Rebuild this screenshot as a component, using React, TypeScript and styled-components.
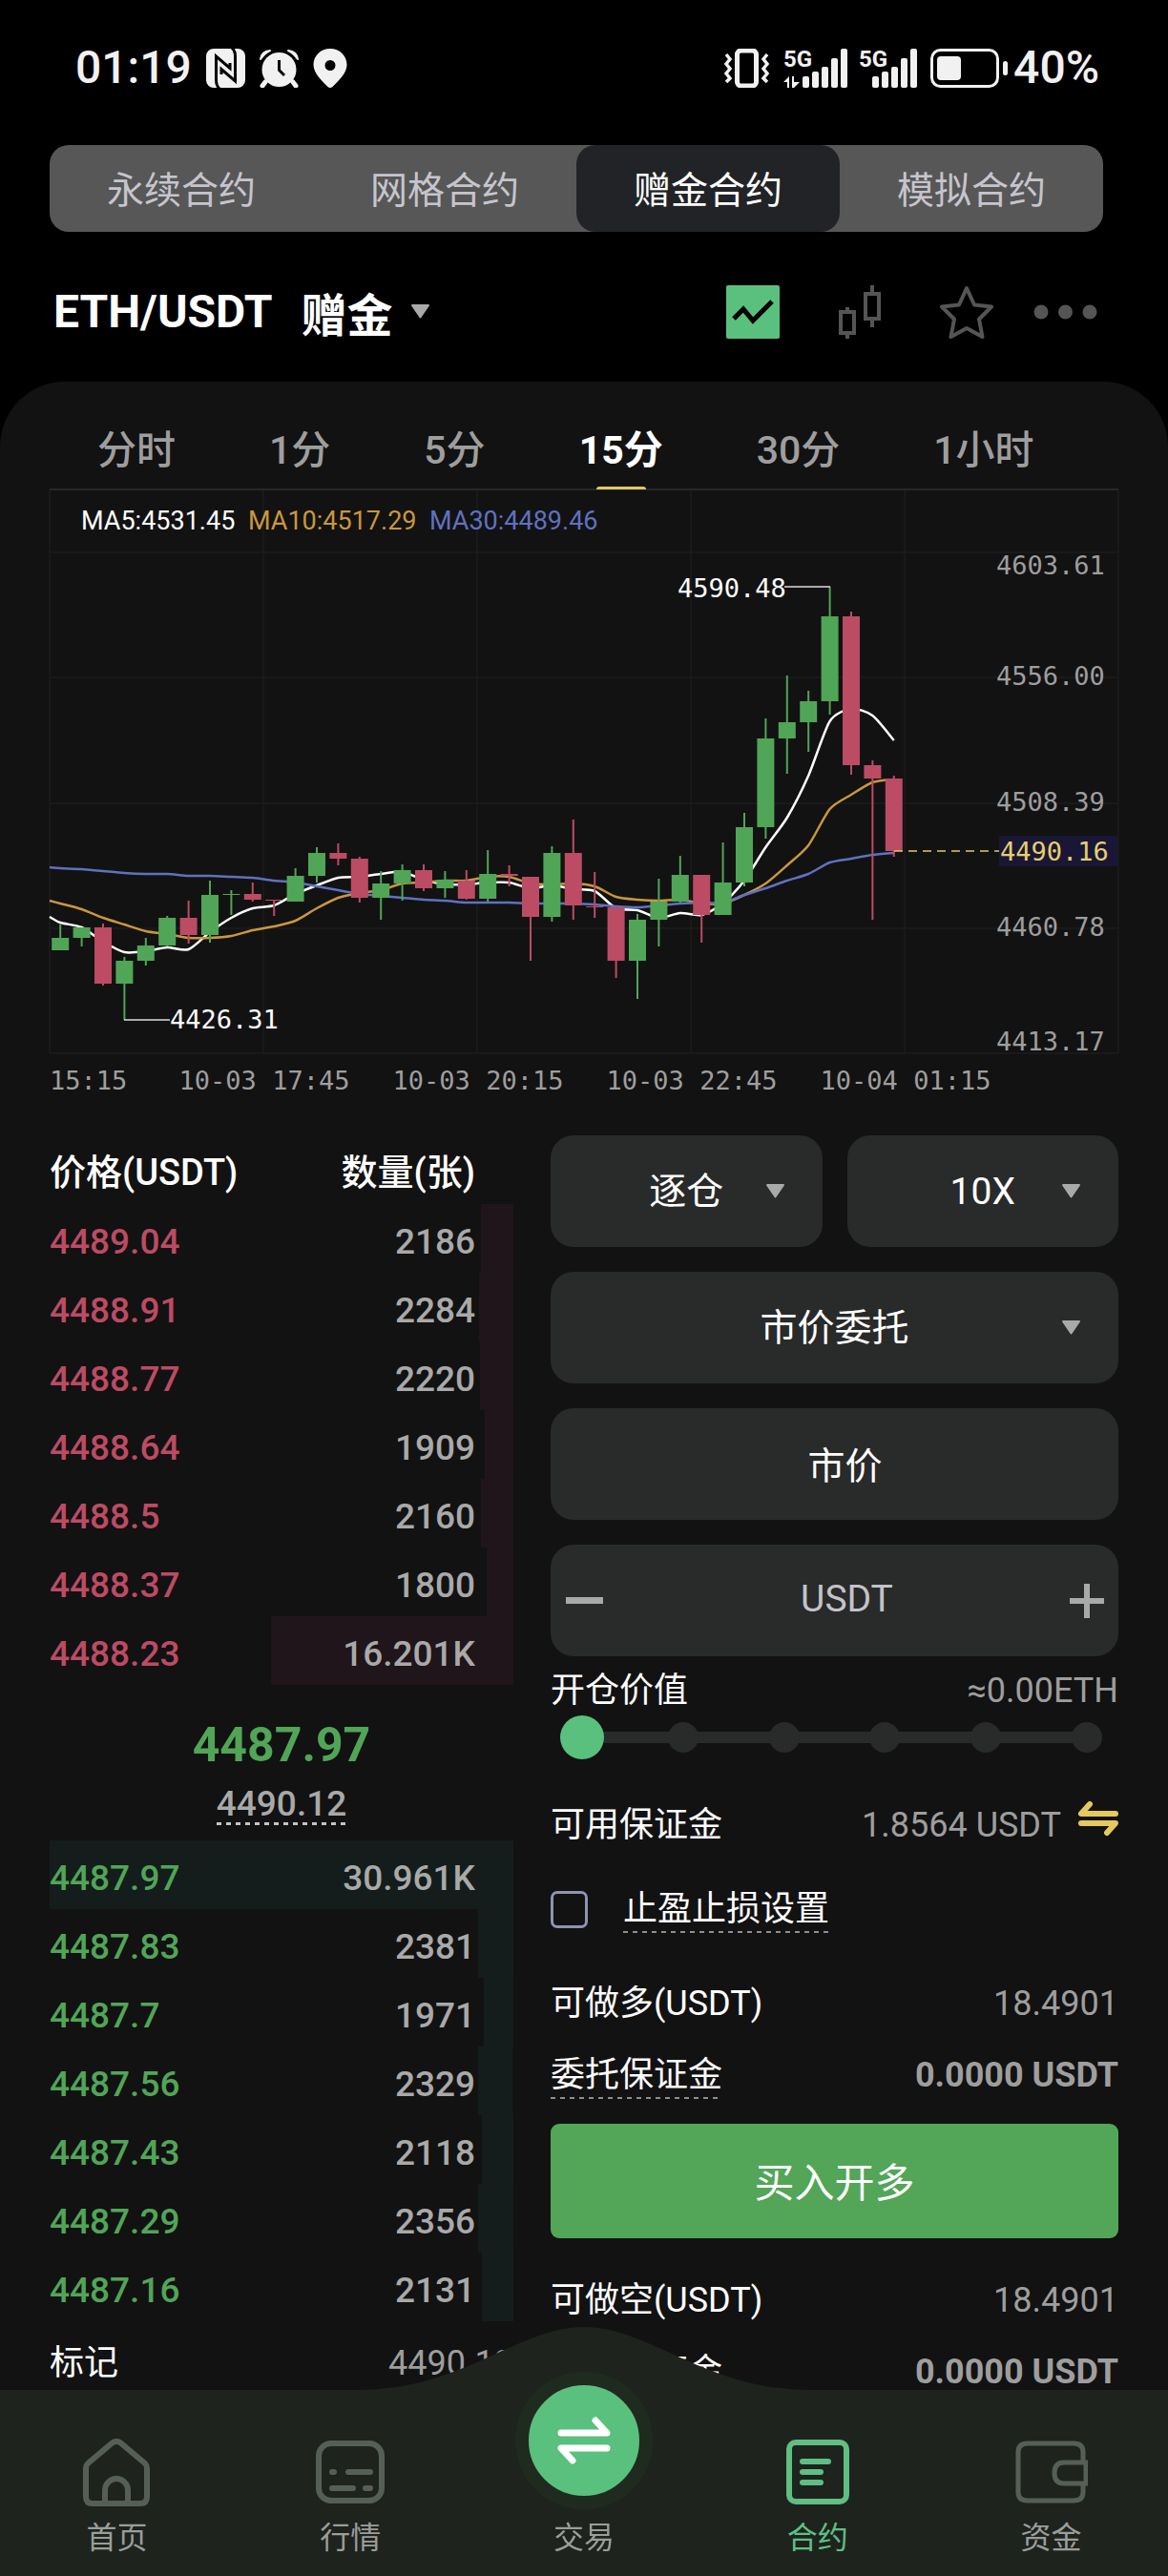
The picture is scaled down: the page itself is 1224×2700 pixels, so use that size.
import React, { useState } from "react";
import styled, { createGlobalStyle, css } from "styled-components";

const color = {
  page: "#000000",
  panel: "#121212",
  field: "#292a2a",
  line: "#1d1d21",
  white: "#ffffff",
  muted: "#9e9e9e",
  soft: "#a9a9a9",
  mint: "#5ac07d",
  up: "#51a557",
  down: "#bc4b64",
  gold: "#e3c960",
  orange: "#c9973f",
  blue: "#6071c0",
  nav: "#1e231e",
};

const sans = `Roboto, "Noto Sans CJK SC", sans-serif`;
const mono = `"DejaVu Sans Mono", monospace`;

const GlobalStyle = createGlobalStyle`
  * { box-sizing: border-box; }
  body { margin: 0; background: ${color.page}; font-family: ${sans}; color: ${color.white}; }
  button, input, select { font: inherit; color: inherit; border: 0; background: none; margin: 0; padding: 0; outline: none; }
  button { cursor: pointer; }
  a { color: inherit; text-decoration: none; }
  svg { display: block; flex: none; }
`;

/* ---------- page frame ---------- */

const Page = styled.div`
  display: flex;
  flex-direction: column;
  min-height: 100vh;
`;

const StatusBar = styled.div`
  display: flex;
  justify-content: space-between;
  align-items: center;
  height: 152px;
  padding: 0 72px 10px 79px;
  color: #f1f1f1;
`;

const StatusGroup = styled.div<{ $gap: number }>`
  display: flex;
  align-items: center;
  gap: ${(p) => p.$gap}px;
`;

const StatusText = styled.span`
  font-size: 48px;
  line-height: 56px;
  font-weight: 500;
`;

const Segments = styled.nav`
  display: grid;
  grid-template-columns: repeat(4, 1fr);
  height: 91px;
  margin: 0 68px 0 52px;
  border-radius: 20px;
  background: #575757;
`;

const Segment = styled.button<{ $active?: boolean }>`
  padding-bottom: 4px;
  border-radius: 20px;
  font-size: 39px;
  color: ${(p) => (p.$active ? color.white : "#c6c5cd")};
  background: ${(p) => (p.$active ? "#222327" : "transparent")};
`;

const Header = styled.header`
  display: flex;
  justify-content: space-between;
  align-items: center;
  height: 157px;
  padding: 10px 74px 0 56px;
`;

const Pair = styled.button`
  display: flex;
  align-items: center;
  font-size: 48px;
  font-weight: 700;
`;

const PairName = styled.span`
  margin-right: 30px;
`;

const PairKind = styled.span`
  margin-right: 18px;
`;

const HeaderTools = styled.div`
  display: flex;
  align-items: center;
  color: #555555;
`;

const Tool = styled.button<{ $space: number }>`
  margin-left: ${(p) => p.$space}px;
`;

const Panel = styled.main`
  flex: 1;
  padding: 0 52px 170px;
  background: ${color.panel};
  border-radius: 68px 68px 0 0;
`;

/* ---------- chart ---------- */

const Periods = styled.div`
  display: flex;
  gap: 98px;
  height: 113px;
  padding: 0 50px;
`;

const Period = styled.button<{ $active?: boolean }>`
  position: relative;
  padding-top: 23px;
  font-size: 41px;
  font-weight: 500;
  white-space: nowrap;
  color: ${(p) => (p.$active ? color.white : color.muted)};
  ${(p) =>
    p.$active &&
    css`
      font-weight: 700;
      &::after {
        content: "";
        position: absolute;
        left: calc(50% - 26px);
        bottom: 0;
        width: 52px;
        height: 3px;
        border-radius: 3px 3px 0 0;
        background: ${color.gold};
      }
    `}
`;

const ChartSvg = styled.svg`
  width: 100%;
  height: auto;
  overflow: visible;
  font-size: 27px;
`;

const AxisText = styled.text`
  font-family: ${mono};
  fill: ${color.muted};
`;

const MarkText = styled.text`
  font-family: ${mono};
  fill: ${color.white};
`;

const PriceText = styled.text`
  font-family: ${mono};
  fill: #e6cf6e;
`;

/* ---------- trading area ---------- */

const Trading = styled.section`
  display: grid;
  grid-template-columns: 486fr 595fr;
  gap: 39px;
  margin-top: 37px;
`;

const Book = styled.div`
  min-width: 0;
`;

const BookTable = styled.table`
  width: 100%;
  border-collapse: collapse;
  font-size: 37px;
  font-weight: 500;
`;

const BookHead = styled.th<{ $end?: boolean }>`
  height: 72px;
  padding: ${(p) => (p.$end ? "0 40px 2px 0" : "0 0 2px")};
  text-align: ${(p) => (p.$end ? "right" : "left")};
  font-size: 38px;
  font-weight: 500;
`;

const BookRow = styled.tr<{ $side: "ask" | "bid" }>`
  height: 72px;
  color: ${(p) => (p.$side === "ask" ? color.down : color.up)};
  background-image: ${(p) =>
    p.$side === "ask"
      ? "linear-gradient(#20151a, #20151a)"
      : "linear-gradient(#141d1b, #141d1b)"};
  background-position: right center;
  background-repeat: no-repeat;
`;

const PriceCell = styled.td`
  padding: 6px 0 0;
`;

const AmountCell = styled.td`
  padding: 6px 40px 0 0;
  text-align: right;
  color: ${color.soft};
`;

const MidCell = styled.td`
  height: 163px;
  padding: 33px 0 0;
  vertical-align: top;
  text-align: center;
`;

const LastPrice = styled.div`
  font-size: 50px;
  line-height: 60px;
  font-weight: 700;
  color: ${color.up};
`;

const dashes = (thickness: number, tint: string) => css`
  background: repeating-linear-gradient(90deg, ${tint} 0 5px, transparent 5px 10px)
    left bottom / 100% ${thickness}px no-repeat;
`;

const IndexPrice = styled.span`
  display: inline-block;
  margin-top: 12px;
  height: 42px;
  line-height: 40px;
  color: ${color.soft};
  ${dashes(3, "#c4c4c4")}
`;

const Line = styled.div<{ $top: number }>`
  display: flex;
  justify-content: space-between;
  align-items: center;
  height: 50px;
  margin-top: ${(p) => p.$top}px;
  font-size: 36px;
  line-height: 50px;
  white-space: nowrap;
`;

const Hint = styled.span`
  ${dashes(2, "#8e8e8e")}
`;

const Value = styled.span<{ $strong?: boolean }>`
  display: flex;
  align-items: center;
  gap: 18px;
  color: ${color.muted};
  font-weight: ${(p) => (p.$strong ? 700 : 400)};
`;

const Form = styled.form`
  min-width: 0;
`;

const Fields = styled.div`
  display: grid;
  grid-template-columns: 1fr 1fr;
  gap: 26px;
  font-size: 39px;
`;

const Field = styled.div<{ $wide?: boolean }>`
  display: grid;
  align-items: center;
  height: 117px;
  border-radius: 24px;
  background: ${color.field};
  grid-column: ${(p) => (p.$wide ? "1 / -1" : "auto")};
`;

const Select = styled.select`
  grid-area: 1 / 1;
  width: 100%;
  height: 100%;
  appearance: none;
  text-align: center;
  text-align-last: center;
`;

const SelectCaret = styled.span`
  grid-area: 1 / 1;
  justify-self: end;
  margin-right: 39px;
  pointer-events: none;
`;

const TextInput = styled.input`
  width: 100%;
  height: 100%;
  min-width: 0;
  padding: 0 0 3px 22px;
  text-align: center;
  &::placeholder {
    color: #c3c3c9;
    opacity: 1;
  }
`;

const Stepper = styled(Field)`
  grid-template-columns: 40px 1fr 36px;
  padding: 0 15px;
`;

const StepButton = styled.button`
  display: grid;
  place-items: center;
  height: 100%;
`;

const SliderBox = styled.div`
  display: grid;
  align-items: center;
  height: 48px;
  margin: 0 10px;
`;

const SliderStops = styled.div`
  grid-area: 1 / 1;
  display: flex;
  justify-content: space-between;
  padding: 0 7px;
  background: linear-gradient(${color.field}, ${color.field}) center / calc(100% - 46px) 12px no-repeat;
`;

const Stop = styled.span`
  width: 32px;
  height: 32px;
  border-radius: 50%;
  background: ${color.field};
`;

const Range = styled.input`
  grid-area: 1 / 1;
  width: 100%;
  height: 48px;
  appearance: none;
  z-index: 1;
  &::-webkit-slider-thumb {
    appearance: none;
    width: 46px;
    height: 46px;
    border-radius: 50%;
    background: ${color.mint};
  }
`;

const CheckLabel = styled.label`
  display: flex;
  align-items: center;
  gap: 37px;
`;

const Checkbox = styled.input`
  appearance: none;
  width: 39px;
  height: 39px;
  border: 3px solid #8f93b0;
  border-radius: 7px;
  &:checked {
    background: ${color.mint};
  }
`;

const BuyButton = styled.button`
  width: 100%;
  height: 120px;
  margin-top: 26px;
  padding-bottom: 4px;
  border-radius: 9px;
  font-size: 42px;
  background: #53a558;
`;

/* ---------- bottom navigation ---------- */

const BottomNav = styled.nav`
  position: fixed;
  left: 0;
  right: 0;
  bottom: 0;
  z-index: 2;
  height: 195px;
  display: grid;
  grid-template-columns: repeat(5, 1fr);
  align-items: end;
  padding-bottom: 22px;
  background: ${color.nav};
`;

const Bump = styled.svg`
  position: absolute;
  left: calc(50% - 237px);
  bottom: 100%;
`;

const NavItem = styled.a<{ $active?: boolean; $gap?: number }>`
  position: relative;
  display: flex;
  flex-direction: column;
  align-items: center;
  gap: ${(p) => p.$gap ?? 14}px;
  color: ${(p) => (p.$active ? "#60be82" : "#565f56")};
`;

const NavLabel = styled.span<{ $active?: boolean }>`
  font-size: 32px;
  line-height: 36px;
  color: ${(p) => (p.$active ? "#60be82" : "#9a9d9a")};
`;

const TradeDisc = styled.span`
  display: grid;
  place-items: center;
  width: 144px;
  height: 144px;
  margin-top: -20px;
  border: 14px solid #202b20;
  border-radius: 50%;
  color: ${color.white};
  background: ${color.mint};
`;

/* ---------- drawings ---------- */

const Caret = ({ w = 21 }: { w?: number }) => (
  <svg width={w} height="15" viewBox="0 0 21 15">
    <path d="M2 1H19L10.500 13.500Z" fill={color.soft} stroke={color.soft} strokeWidth="2" strokeLinejoin="round" />
  </svg>
);

const NfcIcon = () => (
  <svg width="41" height="41" viewBox="0 0 41 41">
    <rect width="41" height="41" rx="8" fill="#f1f1f1" />
    <path d="M14 42Q10.500 39 10.500 33V8L25 20.500V15" fill="none" stroke="#000" strokeWidth="3" />
    <path d="M27 -1Q30.500 2 30.500 8V34L16 21.500V27" fill="none" stroke="#000" strokeWidth="3" />
  </svg>
);

const AlarmIcon = () => (
  <svg width="41" height="41" viewBox="0 0 41 41">
    <circle cx="20.500" cy="22" r="18" fill="#f1f1f1" />
    <path d="M6 35L3 39M35 35L38 39" stroke="#f1f1f1" strokeWidth="5" strokeLinecap="round" />
    <path d="M1 11Q2 3 11 2Q5 5 1 11ZM40 11Q39 3 30 2Q36 5 40 11Z" fill="#f1f1f1" stroke="#f1f1f1" strokeWidth="2" strokeLinejoin="round" />
    <path d="M20.500 12V22.500L26 28" fill="none" stroke="#000" strokeWidth="3" />
  </svg>
);

const PinIcon = () => (
  <svg width="36" height="41" viewBox="0 0 36 41">
    <path
      fillRule="evenodd"
      d="M18 0C8 0 .500 7.500 .500 17C.500 26 10 34 15.500 40Q18 42 20.500 40C26 34 35.500 26 35.500 17C35.500 7.500 28 0 18 0ZM18 12A5.500 5.500 0 1 1 18 23A5.500 5.500 0 1 1 18 12Z"
      fill="#f1f1f1"
    />
  </svg>
);

const VibrateIcon = () => (
  <svg width="49" height="41" viewBox="0 0 49 41">
    <rect x="14.500" y="2" width="20" height="37" rx="4" fill="none" stroke="#f1f1f1" strokeWidth="5" />
    <path d="M3 6L7 11L3 16L7 21L3 26L7 31L3 35M46 6L42 11L46 16L42 21L46 26L42 31L46 35" fill="none" stroke="#f1f1f1" strokeWidth="3.500" />
  </svg>
);

const SignalSvg = styled.svg`
  overflow: visible;
`;

const NetText = styled.text`
  font-size: 24px;
  font-weight: 700;
  fill: #f1f1f1;
`;

const SignalIcon = ({ arrows }: { arrows?: boolean }) => {
  const offset = arrows ? 20 : 14;
  return (
    <SignalSvg width={offset + 47} height="49" viewBox={`0 -4 ${offset + 47} 49`}>
      <NetText x="0" y="19">5G</NetText>
      {arrows && <path d="M0 35L6 29V41H4V35ZM9 29H11V35H17L11 41H9Z" fill="#f1f1f1" />}
      {[12, 17, 22, 31, 41].map((h, i) => (
        <rect key={h} x={offset + i * 10} y={41 - h} width="7" height={h} rx="2" fill="#f1f1f1" />
      ))}
    </SignalSvg>
  );
};

const BatteryIcon = () => (
  <svg width="82" height="41" viewBox="0 0 82 41">
    <rect x="1.500" y="1.500" width="69" height="38" rx="9" fill="none" stroke="#f1f1f1" strokeWidth="3" />
    <rect x="7" y="8" width="25" height="25" rx="4" fill="#f1f1f1" />
    <rect x="76" y="13" width="5" height="15" rx="2.500" fill="#f1f1f1" />
  </svg>
);

const TrendIcon = () => (
  <svg width="56" height="56" viewBox="0 0 56 56">
    <rect width="56" height="56" rx="2" fill={color.mint} />
    <path d="M8 35L18 25L28 37L48 17" fill="none" stroke="#000" strokeWidth="5" />
  </svg>
);

const CandleIcon = () => (
  <svg width="44" height="56" viewBox="0 0 44 56" fill="none" stroke="currentColor" strokeWidth="4">
    <path d="M2 28H16V50H2ZM9 23V28M9 50V56M28 9H42V35H28ZM35 0V9M35 35V44" />
  </svg>
);

const StarIcon = () => (
  <svg width="56" height="56" viewBox="0 0 56 56" fill="none" stroke="currentColor" strokeWidth="4" strokeLinejoin="round">
    <path d="M28 3L36 20.500L54 22.500L41 35.500L44.500 54L28 45L11.500 54L15 35.500L2 22.500L20 20.500Z" />
  </svg>
);

const DotsIcon = () => (
  <svg width="67" height="16" viewBox="0 0 67 16" fill="currentColor">
    <circle cx="8" cy="8" r="7.500" />
    <circle cx="33.500" cy="8" r="7.500" />
    <circle cx="59" cy="8" r="7.500" />
  </svg>
);

const SwapIcon = () => (
  <svg width="42" height="50" viewBox="0 0 42 50" fill="none" stroke={color.gold} strokeWidth="6" strokeLinecap="round" strokeLinejoin="round">
    <path d="M12 3L3 13H39M3 23H39L30 33" />
  </svg>
);

const TradeIcon = () => (
  <svg width="56" height="50" viewBox="0 0 56 50" fill="none" stroke="currentColor" strokeWidth="7" strokeLinecap="round" strokeLinejoin="round">
    <path d="M4 17H52L40 4M52 33H4L16 46" />
  </svg>
);

const HomeIcon = () => (
  <svg width="72" height="72" viewBox="0 0 72 72" fill="none" stroke="currentColor" strokeWidth="6" strokeLinejoin="round">
    <path d="M4 31Q4 28 6 26L31 5Q36 1 41 5L66 26Q68 28 68 31V61Q68 68 61 68H11Q4 68 4 61Z" />
    <path d="M24 68V54A12 12 0 0 1 48 54V68" />
  </svg>
);

const MarketIcon = () => (
  <svg width="72" height="72" viewBox="0 0 72 72" fill="none" stroke="currentColor" strokeWidth="6">
    <rect x="3" y="5" width="66" height="60" rx="13" />
    <path d="M17 35H19M34 35H57M17 52H39M52 52H57" strokeLinecap="round" />
  </svg>
);

const ContractIcon = () => (
  <svg width="72" height="72" viewBox="0 0 72 72" fill="none" stroke="currentColor" strokeWidth="6">
    <rect x="6" y="4" width="60" height="62" rx="7" />
    <path d="M20 24H47M20 35H39M20 46H39" strokeLinecap="round" />
  </svg>
);

const WalletIcon = () => (
  <svg width="76" height="72" viewBox="0 0 76 72" fill="none" stroke="currentColor" strokeWidth="5">
    <path d="M71 25V14Q71 5 61 5H13Q3 5 3 14V56Q3 65 13 65H61Q71 65 71 56V47" />
    <path d="M74 25H51Q41 25 41 36Q41 47 51 47H74Z" />
  </svg>
);

/* ---------- data ---------- */

type Candle = [high: number, top: number, bottom: number, low: number, rising: 0 | 1];

// Each candle in chart units, measured down from the top edge of the grid.
const candles: Candle[] = [
  [456, 470, 483, 483, 1], [459, 459, 470, 479, 1], [455, 459, 518, 520, 0], [490, 494, 518, 556, 1],
  [470, 478, 494, 499, 1], [447, 449, 478, 479, 1], [431, 449, 467, 476, 0], [410, 425, 467, 475, 1],
  [420, 424, 425, 446, 1], [412, 424, 430, 432, 0], [430, 430, 431, 447, 0], [397, 405, 432, 432, 1],
  [375, 381, 405, 412, 1], [371, 381, 387, 394, 0], [385, 387, 428, 433, 0], [400, 413, 428, 451, 1],
  [393, 399, 413, 431, 1], [393, 399, 418, 421, 0], [400, 409, 418, 428, 1], [399, 410, 429, 430, 0],
  [378, 403, 429, 432, 1], [394, 403, 405, 416, 0], [406, 406, 448, 494, 0], [374, 381, 448, 453, 1],
  [346, 381, 436, 451, 0], [401, 437, 438, 449, 0], [438, 438, 494, 512, 0], [445, 451, 494, 534, 1],
  [408, 432, 451, 479, 1], [384, 404, 432, 433, 1], [404, 404, 446, 475, 0], [370, 412, 446, 446, 1],
  [339, 354, 412, 416, 1], [240, 261, 354, 366, 1], [195, 244, 261, 298, 1], [211, 222, 244, 275, 1],
  [102, 133, 222, 236, 1], [128, 133, 289, 299, 0], [284, 289, 303, 451, 0], [300, 303, 379, 385, 0],
];

// The first value of every average is where its line meets the left edge.
const ma5 = [448, 454, 459, 474, 485, 484, 480, 482, 464, 449, 439, 436, 424, 415, 407, 406, 403, 401, 409, 414, 414, 412, 412, 418, 415, 419, 421, 439, 441, 449, 444, 446, 434, 410, 375, 344, 300, 243, 230, 237, 263];
const ma10 = [431, 434, 440, 449, 456, 463, 466, 470, 470, 468, 462, 458, 452, 439, 428, 423, 420, 413, 412, 410, 410, 406, 406, 413, 414, 413, 416, 427, 430, 431, 430, 434, 434, 425, 413, 394, 373, 335, 320, 307, 304];
const ma30 = [396, 397, 398, 400, 402, 403, 403, 405, 405, 406, 407, 410, 412, 416, 420, 424, 426, 428, 430, 431, 433, 433, 433, 434, 434, 434, 435, 437, 438, 436, 434, 433, 433, 425, 418, 410, 403, 391, 387, 383, 381];

const STEP = 22.4;
const centre = (i: number) => STEP / 2 + i * STEP;

const smooth = (values: number[]) => {
  const pts = values.map((y, i) => [i === 0 ? 0 : centre(i - 1), y]);
  let d = `M${pts[0][0]} ${pts[0][1]}`;
  for (let i = 1; i < pts.length; i++) {
    const before = pts[Math.max(i - 2, 0)];
    const [x0, y0] = pts[i - 1];
    const [x1, y1] = pts[i];
    const after = pts[Math.min(i + 1, pts.length - 1)];
    const k = 8;
    d += `C${x0 + (x1 - before[0]) / k} ${y0 + (y1 - before[1]) / k} ${x1 - (after[0] - x0) / k} ${y1 - (after[1] - y0) / k} ${x1} ${y1}`;
  }
  return d;
};

const asks = [
  ["4489.04", 2186], ["4488.91", 2284], ["4488.77", 2220], ["4488.64", 1909],
  ["4488.5", 2160], ["4488.37", 1800], ["4488.23", 16201],
] as const;

const bids = [
  ["4487.97", 30961], ["4487.83", 2381], ["4487.7", 1971], ["4487.56", 2329],
  ["4487.43", 2118], ["4487.29", 2356], ["4487.16", 2131],
] as const;

const deepest = Math.max(...[...asks, ...bids].map(([, amount]) => amount));
const amountText = (n: number) => (n >= 10000 ? `${n / 1000}K` : String(n));

const segments = ["永续合约", "网格合约", "赠金合约", "模拟合约"];
const periods = ["分时", "1分", "5分", "15分", "30分", "1小时"];

/* ---------- sections ---------- */

const Chart = () => (
  <ChartSvg viewBox="0 0 1120 640" role="img" aria-label="ETH/USDT K线图">
    <g stroke={color.line} strokeWidth="1.500">
      {[0, 66, 197, 329, 460, 591].map((y) => (
        <line key={y} x1="0" x2="1120" y1={y} y2={y} />
      ))}
      {[0, 224, 448, 672, 896, 1120].map((x) => (
        <line key={x} x1={x} x2={x} y1="0" y2="591" />
      ))}
      <line x1="0" x2="1120" y1="0" y2="0" stroke="#2c2c2e" />
    </g>

    <text x="33" y="42" fill={color.white}>MA5:4531.45</text>
    <text x="208" y="42" fill={color.orange}>MA10:4517.29</text>
    <text x="398" y="42" fill={color.blue}>MA30:4489.46</text>

    <g fill="none" strokeWidth="2.500">
      <path d={smooth(ma5)} stroke={color.white} />
      <path d={smooth(ma10)} stroke={color.orange} />
      <path d={smooth(ma30)} stroke={color.blue} />
    </g>

    {candles.map(([high, top, bottom, low, rising], i) => (
      <g key={i} fill={rising ? color.up : color.down}>
        <rect x={centre(i) - 1} y={high} width="2" height={low - high} />
        <rect x={centre(i) - 9} y={top} width="18" height={Math.max(bottom - top, 1)} />
      </g>
    ))}

    <path d="M770 102H818M78 556H126" stroke="#dddddd" strokeWidth="1.500" />
    <MarkText x="658" y="113">4590.48</MarkText>
    <MarkText x="126" y="565">4426.31</MarkText>

    <line x1="885" x2="995" y1="379" y2="379" stroke={color.gold} strokeWidth="1.500" strokeDasharray="9 6" />
    <rect x="995" y="363" width="124" height="32" fill="#191735" />
    <PriceText x="996" y="389">4490.16</PriceText>

    <AxisText x="992" y="89">4603.61</AxisText>
    <AxisText x="992" y="205">4556.00</AxisText>
    <AxisText x="992" y="337">4508.39</AxisText>
    <AxisText x="992" y="468">4460.78</AxisText>
    <AxisText x="992" y="588">4413.17</AxisText>

    <AxisText x="0" y="629">15:15</AxisText>
    <g textAnchor="middle">
      <AxisText x="225" y="629">10-03 17:45</AxisText>
      <AxisText x="449" y="629">10-03 20:15</AxisText>
      <AxisText x="673" y="629">10-03 22:45</AxisText>
      <AxisText x="897" y="629">10-04 01:15</AxisText>
    </g>
  </ChartSvg>
);

const BookSide = ({ side, rows }: { side: "ask" | "bid"; rows: readonly (readonly [string, number])[] }) => (
  <tbody>
    {rows.map(([price, amount]) => (
      <BookRow key={price} $side={side} style={{ backgroundSize: `${(amount / deepest) * 100}% 100%` }}>
        <PriceCell>{price}</PriceCell>
        <AmountCell>{amountText(amount)}</AmountCell>
      </BookRow>
    ))}
  </tbody>
);

const OrderBook = () => (
  <Book>
    <BookTable>
      <thead>
        <tr>
          <BookHead scope="col">价格(USDT)</BookHead>
          <BookHead scope="col" $end>数量(张)</BookHead>
        </tr>
      </thead>
      <BookSide side="ask" rows={asks} />
      <tbody>
        <tr>
          <MidCell colSpan={2}>
            <LastPrice>4487.97</LastPrice>
            <IndexPrice>4490.12</IndexPrice>
          </MidCell>
        </tr>
      </tbody>
      <BookSide side="bid" rows={bids} />
    </BookTable>
    <Line $top={19}>
      <span>标记</span>
      <Value>4490.12</Value>
    </Line>
  </Book>
);

const OrderForm = () => {
  const [size, setSize] = useState("");
  const [ratio, setRatio] = useState(0);
  return (
    <Form onSubmit={(e) => e.preventDefault()}>
      <Fields>
        <Field>
          <Select aria-label="保证金模式" defaultValue="逐仓">
            <option>逐仓</option>
            <option>全仓</option>
          </Select>
          <SelectCaret><Caret /></SelectCaret>
        </Field>
        <Field>
          <Select aria-label="杠杆" defaultValue="10X">
            <option>10X</option>
            <option>20X</option>
          </Select>
          <SelectCaret><Caret /></SelectCaret>
        </Field>
        <Field $wide>
          <Select aria-label="委托类型" defaultValue="市价委托">
            <option>市价委托</option>
            <option>限价委托</option>
          </Select>
          <SelectCaret><Caret /></SelectCaret>
        </Field>
        <Field $wide>
          <TextInput aria-label="价格" value="市价" readOnly />
        </Field>
        <Stepper $wide>
          <StepButton type="button" aria-label="减少" onClick={() => setSize(String(Math.max(Number(size) - 1, 0)))}>
            <svg width="39" height="7"><rect width="39" height="7" fill={color.soft} /></svg>
          </StepButton>
          <TextInput aria-label="数量" placeholder="USDT" value={size} onChange={(e) => setSize(e.target.value)} />
          <StepButton type="button" aria-label="增加" onClick={() => setSize(String(Number(size) + 1))}>
            <svg width="36" height="36" viewBox="0 0 36 36">
              <path d="M0 18H36M18 0V36" stroke={color.soft} strokeWidth="6" />
            </svg>
          </StepButton>
        </Stepper>
      </Fields>

      <Line $top={11}>
        <span>开仓价值</span>
        <Value>≈0.00ETH</Value>
      </Line>
      <SliderBox>
        <SliderStops>
          {[0, 20, 40, 60, 80, 100].map((n) => <Stop key={n} />)}
        </SliderStops>
        <Range type="range" aria-label="仓位比例" min={0} max={100} step={20} value={ratio} onChange={(e) => setRatio(Number(e.target.value))} />
      </SliderBox>

      <Line $top={43}>
        <span>可用保证金</span>
        <Value>1.8564 USDT <SwapIcon /></Value>
      </Line>
      <Line $top={38}>
        <CheckLabel>
          <Checkbox type="checkbox" />
          <Hint>止盈止损设置</Hint>
        </CheckLabel>
      </Line>
      <Line $top={49}>
        <span>可做多(USDT)</span>
        <Value>18.4901</Value>
      </Line>
      <Line $top={25}>
        <Hint>委托保证金</Hint>
        <Value $strong>0.0000 USDT</Value>
      </Line>
      <BuyButton type="submit">买入开多</BuyButton>
      <Line $top={40}>
        <span>可做空(USDT)</span>
        <Value>18.4901</Value>
      </Line>
      <Line $top={25}>
        <Hint>委托保证金</Hint>
        <Value $strong>0.0000 USDT</Value>
      </Line>
    </Form>
  );
};

export default function App() {
  return (
    <Page lang="zh-CN">
      <GlobalStyle />
      <StatusBar>
        <StatusGroup $gap={15}>
          <StatusText>01:19</StatusText>
          <NfcIcon />
          <AlarmIcon />
          <PinIcon />
        </StatusGroup>
        <StatusGroup $gap={14}>
          <VibrateIcon />
          <StatusGroup $gap={12}>
            <SignalIcon arrows />
            <SignalIcon />
          </StatusGroup>
          <StatusGroup $gap={5}>
            <BatteryIcon />
            <StatusText>40%</StatusText>
          </StatusGroup>
        </StatusGroup>
      </StatusBar>

      <Segments>
        {segments.map((name) => (
          <Segment key={name} type="button" $active={name === "赠金合约"}>{name}</Segment>
        ))}
      </Segments>

      <Header>
        <Pair type="button">
          <PairName>ETH/USDT</PairName>
          <PairKind>赠金</PairKind>
          <Caret />
        </Pair>
        <HeaderTools>
          <Tool type="button" aria-label="走势图" $space={0}><TrendIcon /></Tool>
          <Tool type="button" aria-label="K线" $space={62}><CandleIcon /></Tool>
          <Tool type="button" aria-label="收藏" $space={62}><StarIcon /></Tool>
          <Tool type="button" aria-label="更多" $space={42}><DotsIcon /></Tool>
        </HeaderTools>
      </Header>

      <Panel>
        <Periods>
          {periods.map((name) => (
            <Period key={name} type="button" $active={name === "15分"}>{name}</Period>
          ))}
        </Periods>
        <Chart />
        <Trading>
          <OrderBook />
          <OrderForm />
        </Trading>
      </Panel>

      <BottomNav>
        <Bump width="474" height="66" viewBox="0 0 474 66">
          <path d="M0 66C110 66 168 0 237 0S364 66 474 66Z" fill={color.nav} />
        </Bump>
        <NavItem href="#home"><HomeIcon /><NavLabel>首页</NavLabel></NavItem>
        <NavItem href="#market"><MarketIcon /><NavLabel>行情</NavLabel></NavItem>
        <NavItem href="#trade" $gap={12}>
          <TradeDisc><TradeIcon /></TradeDisc>
          <NavLabel>交易</NavLabel>
        </NavItem>
        <NavItem href="#contract" $active><ContractIcon /><NavLabel $active>合约</NavLabel></NavItem>
        <NavItem href="#assets"><WalletIcon /><NavLabel>资金</NavLabel></NavItem>
      </BottomNav>
    </Page>
  );
}
